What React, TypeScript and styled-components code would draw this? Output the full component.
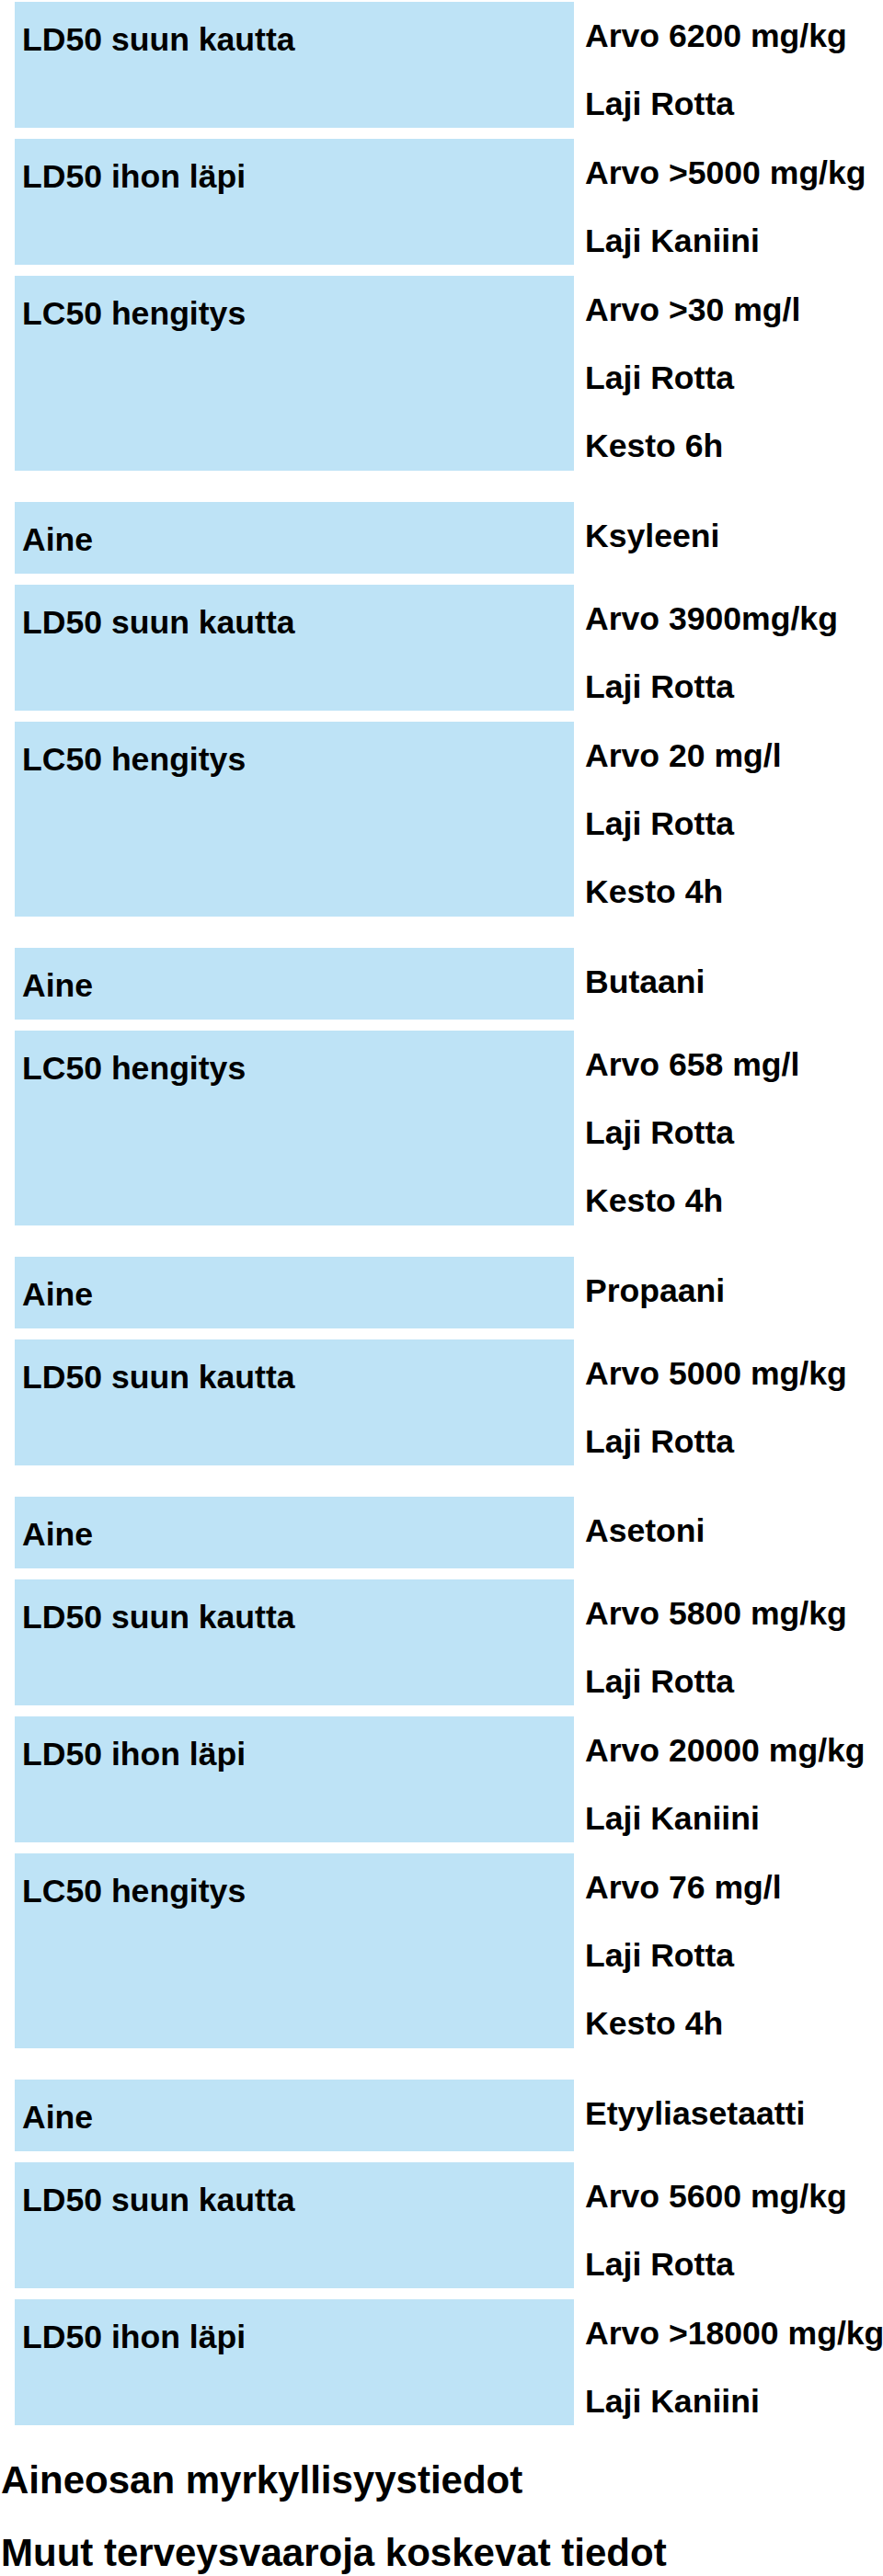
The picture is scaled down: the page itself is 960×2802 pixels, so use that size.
import React from 'react';
import styled, { createGlobalStyle } from 'styled-components';

const Global = createGlobalStyle`
  html, body { margin: 0; padding: 0; background: #ffffff; }
  body {
    font-family: "Liberation Sans", Arial, Helvetica, sans-serif;
    font-weight: 700;
    color: #000000;
  }
  * { box-sizing: border-box; }
`;

const Page = styled.main`
  display: flex;
  flex-direction: column;
  padding-top: 2px;
  width: 960px;
`;

const Groups = styled.div`
  display: flex;
  flex-direction: column;
  gap: 22px;
`;

const Group = styled.section`
  display: flex;
  flex-direction: column;
`;

const Row = styled.div`
  display: grid;
  grid-template-columns: 608px 1fr;
  column-gap: 12px;
  align-items: start;
  padding-left: 16px;
`;

const Label = styled.div<{ $h: number }>`
  height: ${(p) => p.$h}px;
  margin-bottom: 12px;
  background: #bee3f6;
  padding: 21px 0 0 8px;
  font-size: 35.6px;
  line-height: 40px;
  white-space: nowrap;
`;

const Values = styled.div`
  display: flex;
  flex-direction: column;
`;

const Value = styled.div`
  font-size: 35.6px;
  line-height: 74px;
  white-space: nowrap;
`;

const Headings = styled.div`
  display: flex;
  flex-direction: column;
  gap: 31px;
  margin-top: 24px;
  padding-left: 1px;
`;

const Heading = styled.h2`
  margin: 0;
  font-size: 42px;
  line-height: 48px;
  font-weight: 700;
  white-space: nowrap;
`;

type Entry = { label: string; values: string[] };

const heights: Record<number, number> = { 1: 78, 2: 137, 3: 212 };

const data: Entry[][] = [
  [
    { label: 'LD50 suun kautta', values: ['Arvo 6200 mg/kg', 'Laji Rotta'] },
    { label: 'LD50 ihon läpi', values: ['Arvo >5000 mg/kg', 'Laji Kaniini'] },
    { label: 'LC50 hengitys', values: ['Arvo >30 mg/l', 'Laji Rotta', 'Kesto 6h'] },
  ],
  [
    { label: 'Aine', values: ['Ksyleeni'] },
    { label: 'LD50 suun kautta', values: ['Arvo 3900mg/kg', 'Laji Rotta'] },
    { label: 'LC50 hengitys', values: ['Arvo 20 mg/l', 'Laji Rotta', 'Kesto 4h'] },
  ],
  [
    { label: 'Aine', values: ['Butaani'] },
    { label: 'LC50 hengitys', values: ['Arvo 658 mg/l', 'Laji Rotta', 'Kesto 4h'] },
  ],
  [
    { label: 'Aine', values: ['Propaani'] },
    { label: 'LD50 suun kautta', values: ['Arvo 5000 mg/kg', 'Laji Rotta'] },
  ],
  [
    { label: 'Aine', values: ['Asetoni'] },
    { label: 'LD50 suun kautta', values: ['Arvo 5800 mg/kg', 'Laji Rotta'] },
    { label: 'LD50 ihon läpi', values: ['Arvo 20000 mg/kg', 'Laji Kaniini'] },
    { label: 'LC50 hengitys', values: ['Arvo 76 mg/l', 'Laji Rotta', 'Kesto 4h'] },
  ],
  [
    { label: 'Aine', values: ['Etyyliasetaatti'] },
    { label: 'LD50 suun kautta', values: ['Arvo 5600 mg/kg', 'Laji Rotta'] },
    { label: 'LD50 ihon läpi', values: ['Arvo >18000 mg/kg', 'Laji Kaniini'] },
  ],
];

export default function App() {
  return (
    <>
      <Global />
      <Page>
        <Groups>
          {data.map((group, gi) => (
            <Group key={gi}>
              {group.map((entry, ei) => (
                <Row key={ei}>
                  <Label $h={heights[entry.values.length]}>{entry.label}</Label>
                  <Values>
                    {entry.values.map((v, vi) => (
                      <Value key={vi}>{v}</Value>
                    ))}
                  </Values>
                </Row>
              ))}
            </Group>
          ))}
        </Groups>
        <Headings>
          <Heading>Aineosan myrkyllisyystiedot</Heading>
          <Heading>Muut terveysvaaroja koskevat tiedot</Heading>
        </Headings>
      </Page>
    </>
  );
}
